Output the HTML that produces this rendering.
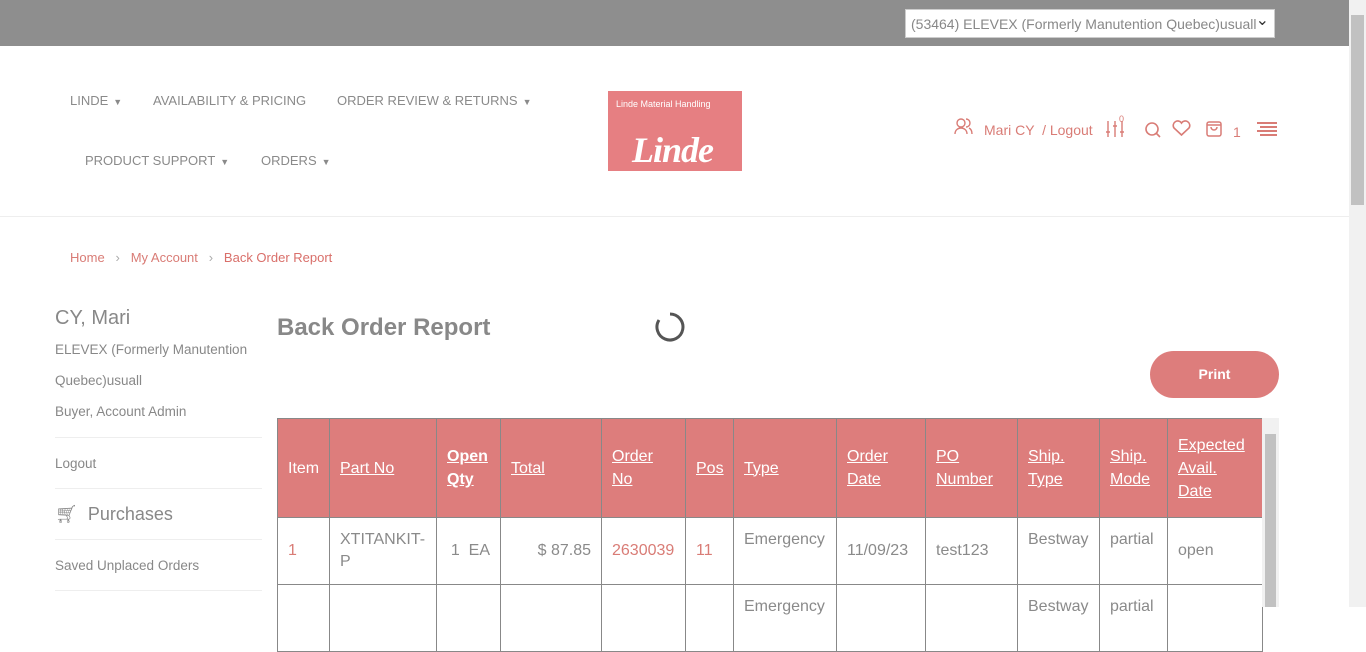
<!DOCTYPE html>
<html><head><meta charset="utf-8"><style>
*{box-sizing:border-box;margin:0;padding:0}
body{width:1366px;height:607px;overflow:hidden;font-family:"Liberation Sans",sans-serif;background:#fff;position:relative;color:#888}
.top{position:absolute;left:0;top:0;width:1349px;height:46px;background:#8e8e8e}
.sel{position:absolute;left:905px;top:9px;width:370px;height:29px;background:#fff;border:1px solid #ccc;font-size:14px;color:#888;padding:6px 5px;white-space:nowrap;overflow:hidden}
.sel:after{content:"⌄";position:absolute;right:5px;top:0;color:#333;font-size:16px}
.sb{position:absolute;left:1349px;top:0;width:17px;height:607px;background:#f1f1f1}
.sb div{position:absolute;left:2px;top:15px;width:13px;height:190px;background:#c1c1c1}
.nav{position:absolute;font-size:13px;color:#8a8a8a}
.nav i{font-style:normal;font-size:9px;margin-left:5px}
.hr{position:absolute;left:0;top:216px;width:1349px;height:1px;background:#eee}
.logo{position:absolute;left:608px;top:91px;width:134px;height:80px;background:#e67f82;color:#fff}
.pk{color:#d97c76}
a{color:inherit}
table{position:absolute;left:277px;top:418px;border-collapse:collapse;font-size:16px;table-layout:fixed;width:985px}
td,th{border:1px solid #888;vertical-align:middle;padding:0 10px;text-align:left}
th{background:#dd7d7c;color:#fff;font-weight:normal;height:99px;line-height:23px}
th a{text-decoration:underline}
td{height:67px;color:#8a8a8a;line-height:22px}
.btn{position:absolute;left:1150px;top:351px;width:129px;height:47px;border-radius:24px;background:#dd7d7c;color:#fff;font-size:14px;font-weight:bold;text-align:center;line-height:47px}
.side{position:absolute;left:55px;font-size:13.5px;color:#888}
.line{position:absolute;left:55px;width:207px;height:1px;background:#eee}
</style></head><body>
<div class="top"><div class="sel">(53464) ELEVEX (Formerly Manutention Quebec)usuall</div></div>
<div class="sb"><div></div></div>
<div class="nav" style="left:70px;top:93px">LINDE<i>▼</i></div>
<div class="nav" style="left:153px;top:93px">AVAILABILITY &amp; PRICING</div>
<div class="nav" style="left:337px;top:93px">ORDER REVIEW &amp; RETURNS<i>▼</i></div>
<div class="nav" style="left:85px;top:153px">PRODUCT SUPPORT<i>▼</i></div>
<div class="nav" style="left:261px;top:153px">ORDERS<i>▼</i></div>
<div class="logo"><div style="font-size:9px;position:absolute;left:8px;top:8px">Linde Material Handling</div><div style="position:absolute;left:24px;top:38px;font:italic bold 36px 'Liberation Serif',serif;letter-spacing:-1px">Linde</div></div>
<svg style="position:absolute;left:954px;top:118px" width="20" height="18" fill="none" stroke="#d97c76" stroke-width="1.4"><circle cx="7" cy="5" r="4"/><path d="M1 16c0-4 3-6 6-6s6 2 6 6M12 1a4 4 0 010 8M15 10c2 1 3 3 3 6"/></svg>
<div class="nav pk" style="left:984px;top:122px;font-size:14px">Mari CY &nbsp;/ Logout</div>
<svg style="position:absolute;left:1105px;top:120px" width="20" height="18" stroke="#d97c76" stroke-width="1.4"><path d="M3 1v16M10 1v16M17 1v16M1 12h4M8 6h4M15 12h4"/></svg>
<div class="pk" style="position:absolute;left:1119px;top:114px;font-size:9px">0</div>
<svg style="position:absolute;left:1144px;top:121px" width="18" height="18" fill="none" stroke="#d97c76" stroke-width="1.6"><circle cx="8" cy="8" r="6"/><path d="M12 12l4 4"/></svg>
<svg style="position:absolute;left:1172px;top:120px" width="19" height="17" fill="none" stroke="#d97c76" stroke-width="1.6"><path d="M9.5 15L2 8a4 4 0 017.5-5 4 4 0 017.5 5z"/></svg>
<svg style="position:absolute;left:1206px;top:119px" width="17" height="18" fill="none" stroke="#d97c76" stroke-width="1.5"><rect x="1" y="3" width="14" height="14" rx="2"/><path d="M1 6h14M5 8a3 3 0 006 0"/></svg>
<div class="nav pk" style="left:1233px;top:124px;font-size:14px">1</div>
<svg style="position:absolute;left:1256px;top:121px" width="22" height="16" stroke="#d97c76" stroke-width="2"><path d="M1 2h20M4 6h17M1 10h20M4 14h17"/></svg>
<div class="hr"></div>
<div style="position:absolute;left:70px;top:250px;font-size:13px" class="pk">Home &nbsp;&nbsp;<span style="color:#aaa">›</span>&nbsp;&nbsp; My Account &nbsp;&nbsp;<span style="color:#aaa">›</span>&nbsp;&nbsp; <span style="color:#d96f6a">Back Order Report</span></div>
<div class="side" style="top:307px;font-size:20px">CY, Mari</div>
<div class="side" style="top:342px">ELEVEX (Formerly Manutention</div>
<div class="side" style="top:373px">Quebec)usuall</div>
<div class="side" style="top:404px">Buyer, Account Admin</div>
<div class="line" style="top:437px"></div>
<div class="side" style="top:456px">Logout</div>
<div class="line" style="top:488px"></div>
<div class="side" style="top:504px;font-size:18px">🛒&#xFE0E; &nbsp;Purchases</div>
<div class="line" style="top:539px"></div>
<div class="side" style="top:558px">Saved Unplaced Orders</div>
<div class="line" style="top:590px"></div>
<div style="position:absolute;left:277px;top:314px;font-size:24px;font-weight:bold;color:#888">Back Order Report</div>
<svg style="position:absolute;left:655px;top:312px" width="30" height="30" fill="none"><path d="M15 2a13 13 0 11-11 6" stroke="#555" stroke-width="3"/></svg>
<div class="btn">Print</div>
<table>
<colgroup><col style="width:52px"><col style="width:107px"><col style="width:64px"><col style="width:101px"><col style="width:84px"><col style="width:48px"><col style="width:103px"><col style="width:89px"><col style="width:92px"><col style="width:82px"><col style="width:68px"><col style="width:95px"></colgroup>
<tr><th>Item</th><th><a>Part No</a></th><th><a><b>Open Qty</b></a></th><th><a>Total</a></th><th><a>Order No</a></th><th><a>Pos</a></th><th><a>Type</a></th><th><a>Order Date</a></th><th><a>PO Number</a></th><th><a>Ship. Type</a></th><th><a>Ship. Mode</a></th><th><a>Expected Avail. Date</a></th></tr>
<tr><td class="pk">1</td><td>XTITANKIT-P</td><td style="text-align:right">1 &nbsp;EA</td><td style="text-align:right">$ 87.85</td><td class="pk">2630039</td><td class="pk">11</td><td style="vertical-align:top;padding-top:11px">Emergency</td><td>11/09/23</td><td>test123</td><td style="vertical-align:top;padding-top:11px">Bestway</td><td style="vertical-align:top;padding-top:11px">partial</td><td>open</td></tr>
<tr><td></td><td></td><td></td><td></td><td></td><td></td><td style="vertical-align:top;padding-top:11px">Emergency</td><td></td><td></td><td style="vertical-align:top;padding-top:11px">Bestway</td><td style="vertical-align:top;padding-top:11px">partial</td><td></td></tr>
</table>
<div style="position:absolute;left:1262px;top:418px;width:17px;height:189px;background:#f1f1f1"><div style="position:absolute;left:3px;top:16px;width:11px;height:173px;background:#c1c1c1"></div></div>
</body></html>
